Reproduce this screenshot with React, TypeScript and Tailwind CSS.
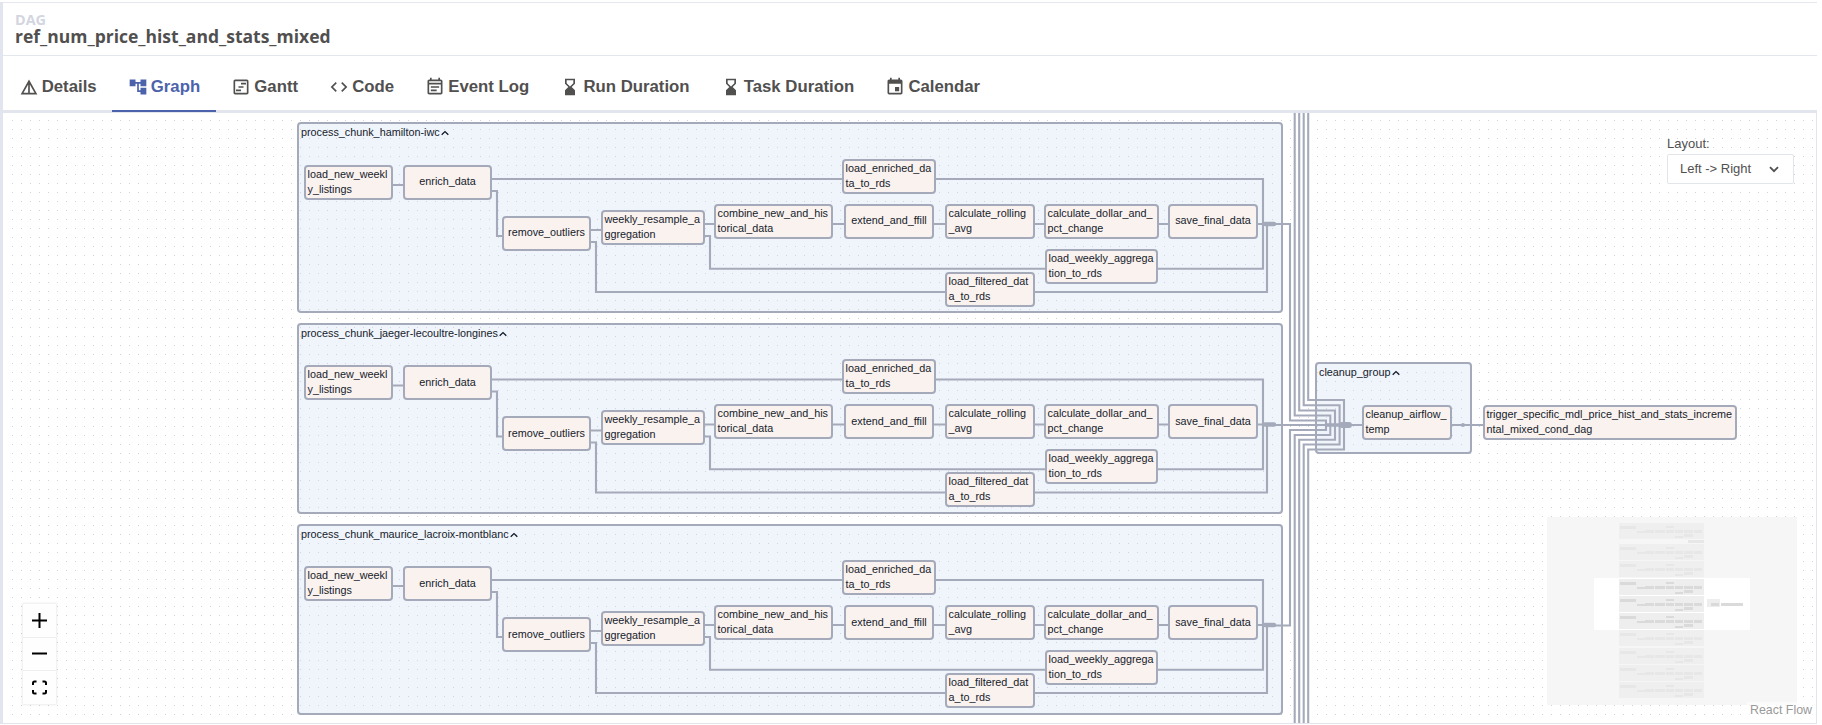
import React from "react";
import { MdDetails, MdAccountTree, MdOutlineViewTimeline, MdCode, MdOutlineEventNote, MdHourglassBottom, MdEvent } from "react-icons/md";

const tabs = [
  { label: "Details", Icon: MdDetails },
  { label: "Graph", Icon: MdAccountTree, active: true },
  { label: "Gantt", Icon: MdOutlineViewTimeline },
  { label: "Code", Icon: MdCode },
  { label: "Event Log", Icon: MdOutlineEventNote },
  { label: "Run Duration", Icon: MdHourglassBottom },
  { label: "Task Duration", Icon: MdHourglassBottom },
  { label: "Calendar", Icon: MdEvent },
];

type NodeData = { x: number; y: number; w: number; lines: string[] };

// Task positions on the canvas for the first group; the others are shifted down.
const tasks: NodeData[] = [
  { x: 304, y: 165, w: 89, lines: ["load_new_weekl", "y_listings"] },
  { x: 403, y: 165, w: 89, lines: ["enrich_data"] },
  { x: 502, y: 216, w: 89, lines: ["remove_outliers"] },
  { x: 601, y: 210, w: 104, lines: ["weekly_resample_a", "ggregation"] },
  { x: 714, y: 204, w: 119, lines: ["combine_new_and_his", "torical_data"] },
  { x: 842, y: 159, w: 94, lines: ["load_enriched_da", "ta_to_rds"] },
  { x: 844, y: 204, w: 90, lines: ["extend_and_ffill"] },
  { x: 945, y: 204, w: 90, lines: ["calculate_rolling", "_avg"] },
  { x: 1044, y: 204, w: 115, lines: ["calculate_dollar_and_", "pct_change"] },
  { x: 1168, y: 204, w: 90, lines: ["save_final_data"] },
  { x: 1045, y: 249, w: 113, lines: ["load_weekly_aggrega", "tion_to_rds"] },
  { x: 945, y: 272, w: 90, lines: ["load_filtered_dat", "a_to_rds"] },
];

const groups = [
  { name: "process_chunk_hamilton-iwc", top: 122, nodeShift: 0, edgeShift: 0 },
  { name: "process_chunk_jaeger-lecoultre-longines", top: 323, nodeShift: 200, edgeShift: 200.5 },
  { name: "process_chunk_maurice_lacroix-montblanc", top: 524, nodeShift: 401, edgeShift: 401 },
];

const groupEdges = [
  "M393 185H403",
  "M492 179H842 M936 179H1263V224",
  "M492 191H497V236H502",
  "M591 230H601",
  "M591 242H596V292H945 M1035 292H1267V224",
  "M705 224H714",
  "M705 236H710V268.7H1045 M1158 268.7H1263V224",
  "M833 224H844 M934 224H945 M1035 224H1044 M1159 224H1168 M1258 224H1275",
].join(" ");

const outerEdges = [
  "M1275 224H1290V420.5H1326V430H1290V625.5H1275",
  "M1275 425H1362",
  "M1294.7 113V415.5H1330.3V435H1294.7V723",
  "M1299.2 113V410.5H1335V439.8H1299.2V723",
  "M1303.7 113V405.3H1339.6V444.5H1303.7V723",
  "M1308.2 113V400H1344V449.5H1308.2V723",
  "M1452 425H1484",
].join(" ");

function GroupTitle({ name }: { name: string }) {
  return (
    <div className="flex items-center gap-[1.5px] pt-px pl-[2px] text-[10.8px] leading-[15px] text-[#151b2b]">
      {name}
      <svg className="h-2 w-2" viewBox="0 0 8 8" fill="none" stroke="#111827" strokeWidth="1.3">
        <path d="M0.7 5.8 4 2.6 7.3 5.8" />
      </svg>
    </div>
  );
}

function Task({ x, y, w, lines, low }: NodeData & { low?: boolean }) {
  return (
    <div
      className={
        "absolute flex h-[35px] flex-col justify-center rounded-[4px] border-2 border-[#a4aaba] bg-[#faf2ef] text-[10.8px] leading-[15px] whitespace-nowrap text-[#151b2b] " +
        (lines.length > 1 ? "items-start pb-px pl-[1.5px]" : low ? "items-center" : "items-center pb-[2px]")
      }
      style={{ left: x, top: y, width: w }}
    >
      {lines.map((l) => (
        <span key={l}>{l}</span>
      ))}
    </div>
  );
}

// Each overview strip repeats the same blocks: x, y, width, height.
const miniBlocks = [
  [1, 3, 16, 3], [18, 8, 9, 2], [26, 7, 9, 3], [36, 7, 10, 3], [47, 3, 8, 2], [47, 7, 8, 3],
  [56, 7, 8, 3], [65, 7, 9, 3], [75, 7, 8, 3], [65, 11, 9, 3], [56, 13, 8, 2],
];
const miniRows = [523, 544, 561, 579, 596, 613, 630, 648, 665, 682];

function MiniMap() {
  return (
    <svg className="absolute top-[517px] left-[1547px]" width="250" height="188" viewBox="1547 517 250 188">
      <rect x="1547" y="517" width="250" height="188" fill="#fff" />
      {miniRows.map((y) => (
        <g key={y}>
          <rect x="1619" y={y} width="85" height="16" fill="#eee" />
          {miniBlocks.map(([bx, by, w, h], i) => (
            <rect key={i} x={1619 + bx} y={y + by} width={w} height={h} fill="#dadada" />
          ))}
        </g>
      ))}
      <rect x="1688" y="540" width="16" height="3" fill="#dadada" />
      <rect x="1707" y="599" width="13" height="8" fill="#eee" />
      <rect x="1711" y="603" width="8" height="3" fill="#dadada" />
      <rect x="1721" y="603" width="22" height="3" fill="#dadada" />
      <path d="M1547 517h250v188h-250z M1594 578v52h156v-52z" fill="#f0f0f0" fillOpacity="0.6" fillRule="evenodd" />
    </svg>
  );
}

const controls = [
  { label: "zoom in", d: "M0 7.5H15M7.5 0V15" },
  { label: "zoom out", d: "M0 7.5H15" },
  { label: "fit view", d: "M1 5V3Q1 1.5 2.5 1.5H4.5M10.5 1.5H12.5Q14 1.5 14 3V5M14 10V12Q14 13.5 12.5 13.5H10.5M4.5 13.5H2.5Q1 13.5 1 12V10" },
];

export default function App() {
  return (
    <div className="relative h-[725px] w-[1822px] overflow-hidden bg-white font-['Liberation_Sans',sans-serif]">
      <div className="mt-[2px] flex h-[722px] w-[1817px] flex-col border-b border-l-3 border-[#e2e5ee]">
        <header className="flex h-[54px] shrink-0 flex-col border-t border-b border-[#e5e7ee] pt-[10px] pl-[12px] font-['Open_Sans',sans-serif] font-bold">
          <span className="text-[14.4px] leading-[14px] text-[#d3d6e0]">DAG</span>
          <h1 className="text-[17.5px] leading-[19px] text-[#51504f]">ref_num_price_hist_and_stats_mixed</h1>
        </header>
        <nav className="flex h-[57px] shrink-0 border-b-3 border-[#e2e5ee]">
          {tabs.map(({ label, Icon, active }) => (
            <div
              key={label}
              className={
                "flex h-[56px] items-center gap-[3.2px] border-b-2 px-[15.5px] pt-[7px] text-[16.75px] font-bold whitespace-nowrap " +
                (active ? "border-[#4c63ac] text-[#4c63ac]" : "border-transparent text-[#51504f]")
              }
            >
              <Icon className="h-5 w-5 shrink-0" />
              <span>{label}</span>
            </div>
          ))}
        </nav>
        <main className="flex-1 border-r border-[#e2e5ee]" />
      </div>

      <svg className="absolute top-0 left-0" width="1822" height="725">
        <defs>
          <pattern id="dots" x="8" y="116" width="9" height="9" patternUnits="userSpaceOnUse">
            <rect x="4" y="4" width="1" height="1" fill="#d0d4da" />
          </pattern>
        </defs>
        <rect x="5" y="113" width="1811" height="609" fill="url(#dots)" />
      </svg>
      {groups.map((g) => (
        <div
          key={g.name}
          className="absolute left-[297px] h-[191px] w-[986px] rounded-[4px] border-2 border-[#a4aaba] bg-[#cdd9f3]/30"
          style={{ top: g.top }}
        >
          <GroupTitle name={g.name} />
        </div>
      ))}
      <div className="absolute top-[362px] left-[1315px] h-[92px] w-[157px] rounded-[4px] border-2 border-[#a4aaba] bg-[#cdd9f3]/30">
        <GroupTitle name="cleanup_group" />
      </div>
      <svg className="absolute top-0 left-0" width="1822" height="725" fill="none" stroke="#a4aaba" strokeWidth="2.1">
        {groups.map((g) => (
          <g key={g.name} transform={`translate(0 ${g.edgeShift})`}>
            <path d={groupEdges} />
            <path d="M1265 224H1274" strokeWidth="4.4" strokeLinecap="round" />
          </g>
        ))}
        <path d={outerEdges} />
        <path d="M1327 425H1346" strokeWidth="3.5" />
        <path d="M1342 425H1349" strokeWidth="6" strokeLinecap="round" />
        <circle cx="1463" cy="425" r="2" fill="#a4aaba" stroke="none" />
      </svg>
      {groups.map((g) =>
        tasks.map((t) => <Task key={g.name + t.lines[0]} {...t} y={t.y + g.nodeShift} low={g.nodeShift > 0} />)
      )}
      <Task x={1362} y={405} w={90} lines={["cleanup_airflow_", "temp"]} />
      <Task x={1483} y={405} w={254} lines={["trigger_specific_mdl_price_hist_and_stats_increme", "ntal_mixed_cond_dag"]} />

      <div className="absolute top-[136px] left-[1667px] w-[127px] text-[13px] text-[#51504f]">
        <div className="h-[18px] leading-[16px]">Layout:</div>
        <div className="flex h-[30px] items-center justify-between rounded-[2px] border border-[#e2e5ea] bg-white pr-[14px] pl-[12px]">
          <span>{"Left -> Right"}</span>
          <svg className="h-[10px] w-[10px]" viewBox="0 0 10 10" fill="none" stroke="#51504f" strokeWidth="1.8">
            <path d="M1 3.2 5 7.2 9 3.2" />
          </svg>
        </div>
      </div>

      <div className="absolute top-[604px] left-[23px] flex w-[33px] flex-col shadow-[0_0_2px_1px_rgba(0,0,0,0.08)]">
        {controls.map((c, i) => (
          <button
            key={c.label}
            aria-label={c.label}
            className={"flex items-center justify-center bg-[#fefefe] " + (i < 2 ? "h-[33.5px] border-b border-[#eee]" : "h-[33px]")}
          >
            <svg className="h-[15px] w-[15px]" viewBox="0 0 15 15" fill="none" stroke="#000" strokeWidth="2">
              <path d={c.d} />
            </svg>
          </button>
        ))}
      </div>

      <MiniMap />
      <div className="absolute top-[702px] left-[1747px] h-[18px] w-[68px] bg-white/60 pl-[3px] text-[12.4px] leading-[17px] whitespace-nowrap text-[#999]">
        React Flow
      </div>
    </div>
  );
}
